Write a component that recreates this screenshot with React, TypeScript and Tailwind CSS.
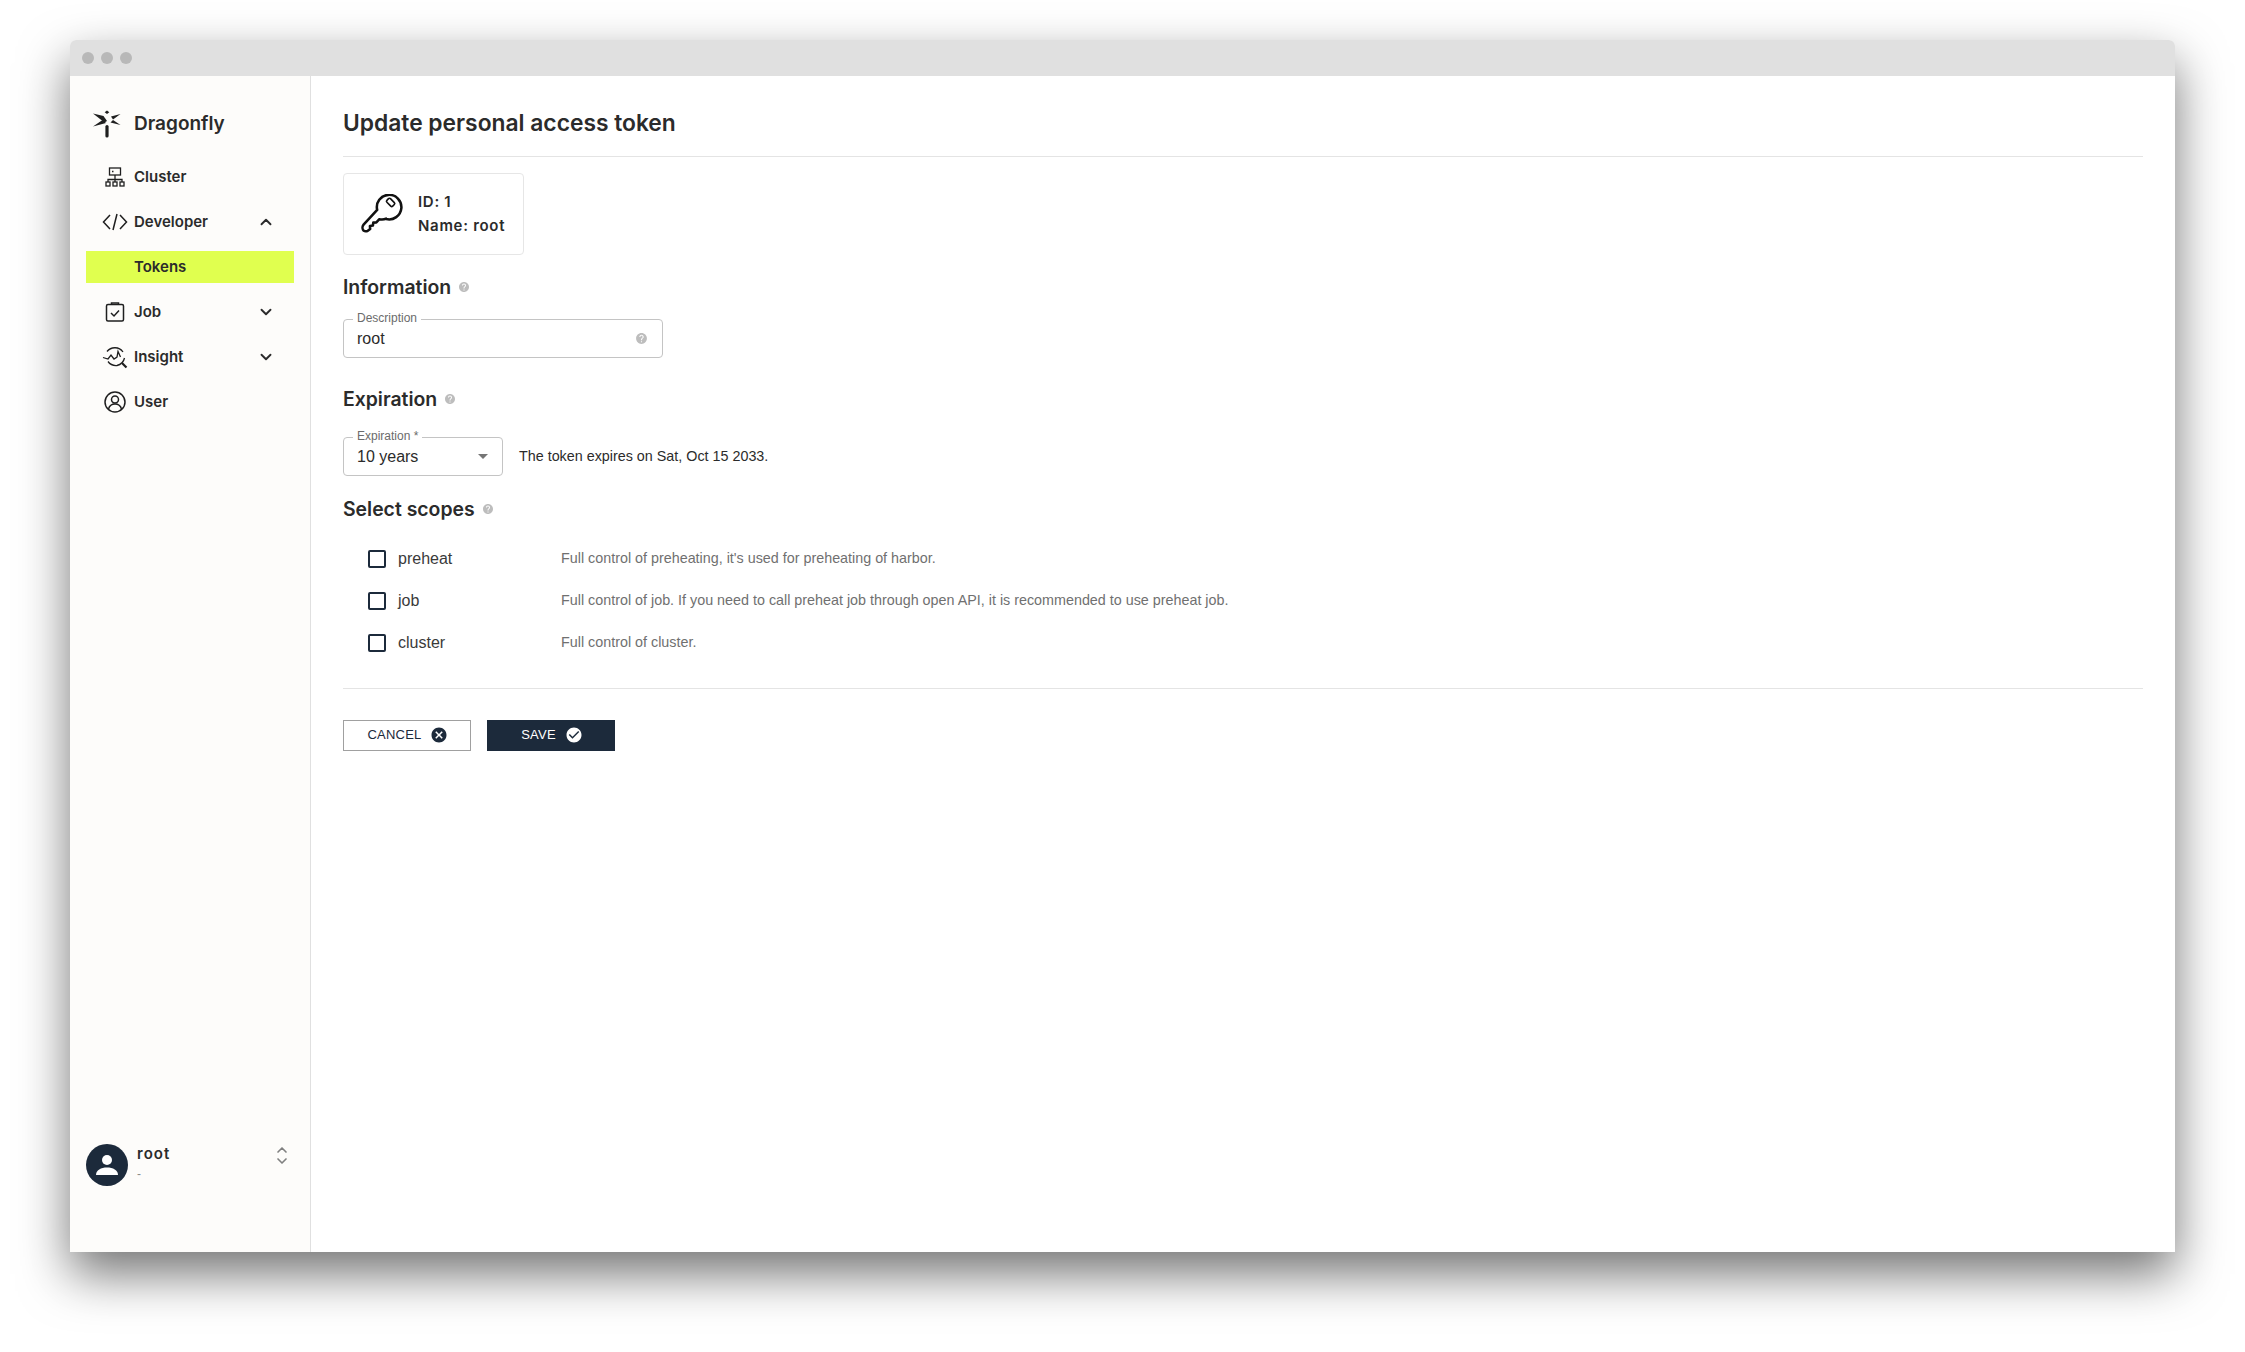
import React from 'react';
import { ChevronDown, ChevronUp } from 'lucide-react';
import { MdCancel, MdCheckCircle, MdHelp } from 'react-icons/md';

const heading = "font-['Inter','Liberation_Sans',sans-serif]";

const Logo = () => (
  <svg width="28" height="28" viewBox="0 0 28 28" fill="#1f1f1f">
    <path d="M0 3.500l10.500 2.500 3.500 5-2.500 1.500L0 3.500z" />
    <path d="M0 16.500l9.500-6.500 3.500 3L0 16.500z" />
    <path d="M27.500 4l-9.500 2.500 2 3L27.500 4z" />
    <path d="M27.500 15l-7.500-5-2.500 2.500 10 2.500z" />
    <path d="M14 .5l2.300 1.800L14 4l-2.300-1.700L14 .5z" />
    <rect x="12.400" y="15" width="3.200" height="12.500" rx="1.600" />
  </svg>
);

const ClusterIcon = () => (
  <svg width="20" height="20" viewBox="0 0 20 20" fill="none" stroke="#1f1f1f" strokeWidth="1.300">
    <rect x="4.500" y="1" width="11" height="7" />
    <path d="M7 4.500h1.500M10 8v4M3 15v-2.500h14V15M10 12.500V15" />
    <rect x="1" y="15" width="4" height="4" />
    <rect x="8" y="15" width="4" height="4" />
    <rect x="15" y="15" width="4" height="4" />
  </svg>
);

const CodeIcon = () => (
  <svg width="26" height="20" viewBox="0 0 26 20" fill="none" stroke="#1f1f1f" strokeWidth="1.500">
    <path d="M8 3L1.500 10 8 17M18 3l6.500 7-6.500 7M15 2l-4 16" />
  </svg>
);

const JobIcon = () => (
  <svg width="20" height="20" viewBox="0 0 20 20" fill="none" stroke="#1f1f1f" strokeWidth="1.500">
    <rect x="1.500" y="2.500" width="17" height="16.500" rx="1.500" />
    <path d="M6.500 2.500V1h7v1.500M6 11l3 3 5-5.500" />
  </svg>
);

const InsightIcon = () => (
  <svg width="26" height="24" viewBox="0 0 26 24" fill="none" stroke="#1f1f1f" strokeWidth="1.300">
    <path d="M5 6.500A10 10 0 0 1 21 7M22.500 13A10 10 0 0 1 15 20.500 10 10 0 0 1 6 16.500" />
    <path d="M1 12.500l5 1.500 3-4 3 4 3-2 1-5.500 2.500 5.500" />
    <path d="M20 18l4.500 4.500" strokeWidth="2.200" />
  </svg>
);

const UserIcon = () => (
  <svg width="22" height="22" viewBox="0 0 22 22" fill="none" stroke="#1f1f1f" strokeWidth="1.500">
    <circle cx="11" cy="11" r="10" />
    <circle cx="11" cy="8.500" r="3.500" />
    <path d="M4.500 18c1-3.500 3.500-5 6.500-5s5.500 1.500 6.500 5" />
  </svg>
);

const KeyIcon = () => (
  <svg width="42" height="40" viewBox="0 0 46 44" fill="none" stroke="#111" strokeWidth="2.800" strokeLinejoin="round">
    <path d="M27.500 27.500a13.500 13.500 0 1 0-9.800-10L2.500 34c-1.500 2-1 5 .5 6.500 1 .7 2.500.7 4 .2l3-2.200-.3-3.200 3.300-.6.400-3.200 3.400-.2 3.300-3.600c2.500.5 5 .5 7.400-.700z" />
    <rect x="28" y="6.500" width="9" height="5.500" rx="1.500" transform="rotate(45 32.500 9.200)" strokeWidth="1.800" />
  </svg>
);

const Help = ({ size = 12 }: { size?: number }) => <MdHelp size={size} className="text-[#bdbdbd] shrink-0" />;

const NavItem = ({ icon, label, chevron, active }: { icon?: React.ReactNode; label: string; chevron?: 'up' | 'down'; active?: boolean }) => (
  <div className={`flex items-center h-[32px] w-[208px] ${active ? 'bg-[#e0ff4f]' : ''}`}>
    <div className="w-[48px] flex justify-center pl-[9px]">{icon}</div>
    <span className={`${heading} text-[15px] font-semibold text-[#2b2b2b] flex-1`}>{label}</span>
    {chevron === 'up' && <ChevronUp size={18} strokeWidth={2.500} className="mr-[19px] text-[#2b2b2b]" />}
    {chevron === 'down' && <ChevronDown size={18} strokeWidth={2.500} className="mr-[19px] text-[#2b2b2b]" />}
  </div>
);

const SectionTitle = ({ children }: { children: React.ReactNode }) => (
  <div className="flex items-center gap-[7px]">
    <h2 className={`${heading} text-[19.400px] leading-[24px] font-semibold text-[#2b2b2b]`}>{children}</h2>
    <Help />
  </div>
);

const Scope = ({ name, desc }: { name: string; desc: string }) => (
  <div className="flex items-center h-[42px] pl-[25px]">
    <div className="w-[18px] h-[18px] border-2 border-[#1c2a3b] rounded-[2px]" />
    <span className="w-[175px] pl-[12px] text-[16px] text-[#3a3a3a]">{name}</span>
    <span className="text-[14.34px] text-[#707070]">{desc}</span>
  </div>
);

export default function App() {
  return (
    <div className="h-[1352px] w-full bg-white pt-[40px] px-[70px] font-['Liberation_Sans',sans-serif] overflow-hidden">
      <div className="h-[1212px] flex flex-col rounded-t-[6px] shadow-[0_22px_50px_rgba(0,0,0,0.55)] bg-white">
        <div className="h-[36px] shrink-0 bg-[#e0e0e0] rounded-t-[6px] flex items-center gap-[7px] pl-[12px]">
          <span className="w-[12px] h-[12px] rounded-full bg-[#b8b8b8]" />
          <span className="w-[12px] h-[12px] rounded-full bg-[#b8b8b8]" />
          <span className="w-[12px] h-[12px] rounded-full bg-[#b8b8b8]" />
        </div>
        <div className="flex flex-1 min-h-0">
          <aside className="w-[241px] shrink-0 bg-[#fdfcfa] border-r border-[#e0e0e0] flex flex-col pl-[16px] pr-[16px] pb-[66px]">
            <div className="flex items-center h-[30px] mt-[33px] mb-[22px] pl-[7px]">
              <Logo />
              <span className={`${heading} text-[19px] font-semibold text-[#2b2b2b] ml-[13px]`}>Dragonfly</span>
            </div>
            <div className="flex flex-col gap-[13px]">
              <NavItem icon={<ClusterIcon />} label="Cluster" />
              <NavItem icon={<CodeIcon />} label="Developer" chevron="up" />
              <NavItem label="Tokens" active />
              <NavItem icon={<JobIcon />} label="Job" chevron="down" />
              <NavItem icon={<InsightIcon />} label="Insight" chevron="down" />
              <NavItem icon={<UserIcon />} label="User" />
            </div>
            <div className="mt-auto flex items-start">
              <div className="w-[42px] h-[42px] rounded-full bg-[#1c2a3b] flex items-center justify-center">
                <svg width="22" height="22" viewBox="0 0 22 22" fill="#fff">
                  <circle cx="11" cy="6" r="5" />
                  <path d="M0 21c0-5 5-7.500 11-7.500S22 16 22 21H0z" />
                </svg>
              </div>
              <div className="ml-[9px] flex-1">
                <div className={`${heading} text-[15px] leading-[20px] font-semibold tracking-[1px] text-[#2b2b2b]`}>root</div>
                <div className="text-[12px] leading-[16px] mt-[2px] text-[#8a8a8a]">-</div>
              </div>
              <div className="flex flex-col items-center text-[#808080] mt-[-2px] mr-[4px]">
                <ChevronUp size={16} strokeWidth={2.500} className="mb-[-5px]" />
                <ChevronDown size={16} strokeWidth={2.500} />
              </div>
            </div>
          </aside>
          <main className="flex-1 px-[32px]">
            <h1 className={`${heading} text-[22.800px] leading-[30px] font-semibold text-[#2b2b2b] mt-[32px] pb-[18px] border-b border-[#e4e4e4]`}>
              Update personal access token
            </h1>
            <div className="mt-[16px] w-[181px] h-[82px] border border-[#e6e6e6] rounded-[4px] flex items-center pl-[17px] gap-[15px]">
              <KeyIcon />
              <div className={`${heading} text-[15px] leading-[24px] font-semibold tracking-[0.7px] text-[#2b2b2b]`}>
                <div>ID: 1</div>
                <div>Name: root</div>
              </div>
            </div>
            <div className="mt-[20px]"><SectionTitle>Information</SectionTitle></div>
            <div className="relative mt-[20px] w-[320px] h-[39px] border border-[#c4c4c4] rounded-[4px] flex items-center justify-between pl-[13px] pr-[14px]">
              <span className="absolute left-[9px] top-[-8px] bg-white px-[4px] text-[12px] leading-[12px] text-[#6b6b6b]">Description</span>
              <span className="text-[16px] text-[#2b2b2b]">root</span>
              <Help size={13} />
            </div>
            <div className="mt-[29px]"><SectionTitle>Expiration</SectionTitle></div>
            <div className="mt-[26px] flex items-center">
              <div className="relative w-[160px] h-[39px] border border-[#c4c4c4] rounded-[4px] flex items-center justify-between pl-[13px] pr-[14px]">
                <span className="absolute left-[9px] top-[-8px] bg-white px-[4px] text-[12px] leading-[12px] text-[#6b6b6b]">Expiration *</span>
                <span className="text-[16px] text-[#2b2b2b]">10 years</span>
                <span className="w-0 h-0 border-x-[5px] border-x-transparent border-t-[5px] border-t-[#757575]" />
              </div>
              <span className="ml-[16px] text-[14.34px] text-[#2b2b2b]">The token expires on Sat, Oct 15 2033.</span>
            </div>
            <div className="mt-[21px]"><SectionTitle>Select scopes</SectionTitle></div>
            <div className="mt-[17px]">
              <Scope name="preheat" desc="Full control of preheating, it's used for preheating of harbor." />
              <Scope name="job" desc="Full control of job. If you need to call preheat job through open API, it is recommended to use preheat job." />
              <Scope name="cluster" desc="Full control of cluster." />
            </div>
            <div className="mt-[24px] border-t border-[#e4e4e4]" />
            <div className="mt-[31px] flex gap-[16px]">
              <button className="w-[128px] h-[31px] border border-[#a0a0a0] bg-white flex items-center justify-center gap-[9px] text-[13px] tracking-[0.2px] text-[#1c2a3b] pb-[1px] pl-[2px]">
                CANCEL <MdCancel size={18} className="text-[#1c2a3b]" />
              </button>
              <button className="w-[128px] h-[31px] bg-[#1c2a3b] flex items-center justify-center gap-[9px] text-[13px] tracking-[0.2px] text-white pb-[1px] pl-[2px]">
                SAVE <MdCheckCircle size={18} className="text-white" />
              </button>
            </div>
          </main>
        </div>
      </div>
    </div>
  );
}
